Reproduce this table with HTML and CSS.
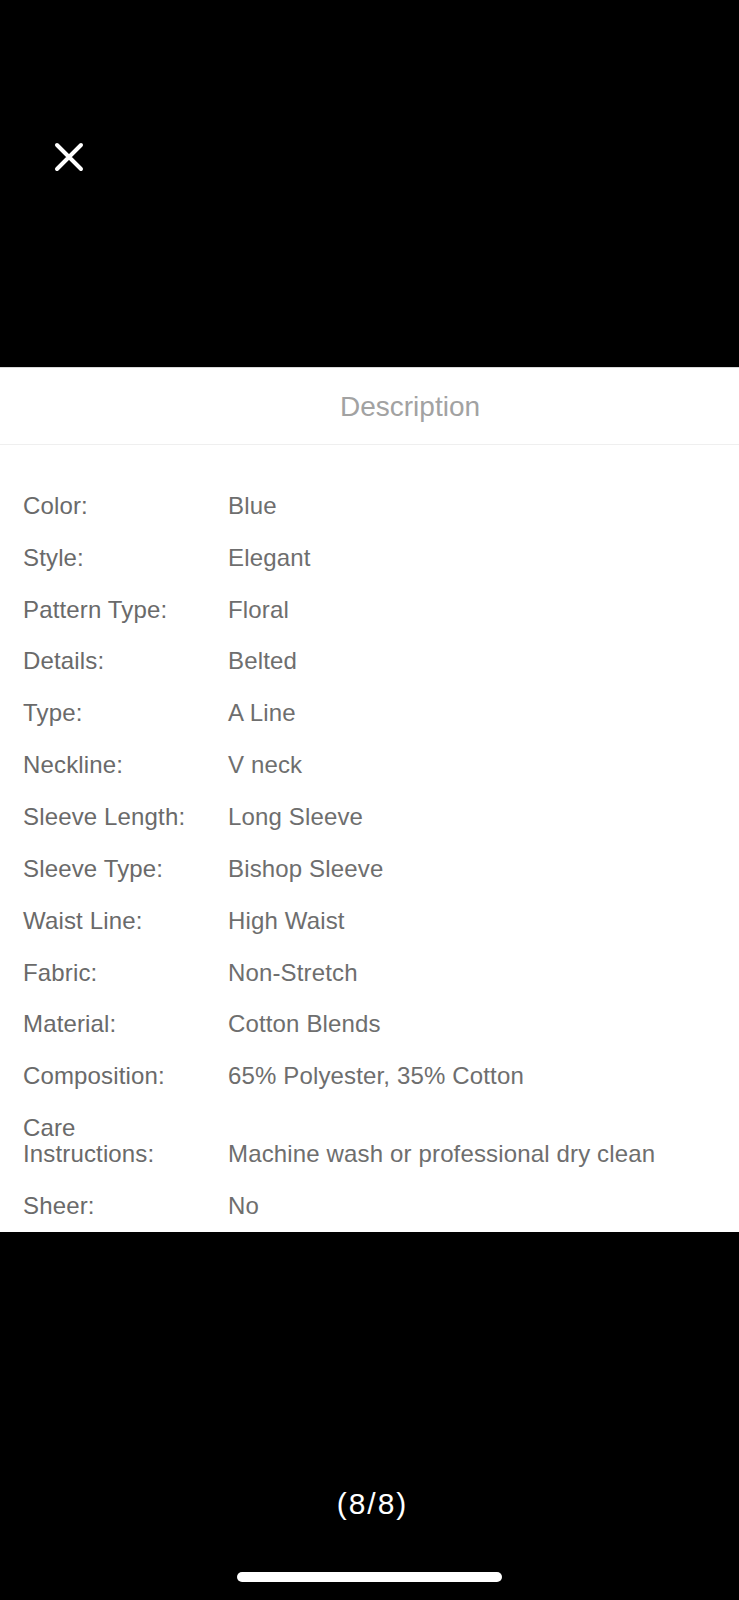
FILE: index.html
```html
<!DOCTYPE html>
<html lang="en">
<head>
<meta charset="utf-8">
<title>Description</title>
<link rel="stylesheet" href="styles.css">
</head>
<body>
<div class="screen">
  <div class="top">
    <button class="close" aria-label="Close">
      <svg width="32" height="32" viewBox="0 0 32 32"><path d="M4 4 L28 28 M28 4 L4 28" stroke="#fff" stroke-width="4" stroke-linecap="round" fill="none"/></svg>
    </button>
  </div>
  <div class="panel">
    <div class="panel-head">Description</div>
    <div class="specs">
      <div class="row"><div class="label">Color:</div><div class="value">Blue</div></div>
      <div class="row"><div class="label">Style:</div><div class="value">Elegant</div></div>
      <div class="row"><div class="label">Pattern Type:</div><div class="value">Floral</div></div>
      <div class="row"><div class="label">Details:</div><div class="value">Belted</div></div>
      <div class="row"><div class="label">Type:</div><div class="value">A Line</div></div>
      <div class="row"><div class="label">Neckline:</div><div class="value">V neck</div></div>
      <div class="row"><div class="label">Sleeve Length:</div><div class="value">Long Sleeve</div></div>
      <div class="row"><div class="label">Sleeve Type:</div><div class="value">Bishop Sleeve</div></div>
      <div class="row"><div class="label">Waist Line:</div><div class="value">High Waist</div></div>
      <div class="row"><div class="label">Fabric:</div><div class="value">Non-Stretch</div></div>
      <div class="row"><div class="label">Material:</div><div class="value">Cotton Blends</div></div>
      <div class="row"><div class="label">Composition:</div><div class="value">65% Polyester, 35% Cotton</div></div>
      <div class="row"><div class="label">Care Instructions:</div><div class="value">Machine wash or professional dry clean</div></div>
      <div class="row"><div class="label">Sheer:</div><div class="value">No</div></div>
    </div>
  </div>
  <div class="bottom">
    <div class="counter">(8/8)</div>
    <div class="home-bar"></div>
  </div>
</div>
</body>
</html>
```

FILE: styles.css
```css
html, body {
  margin: 0;
  padding: 0;
  background: #000;
}

body {
  font-family: "Liberation Sans", Arial, sans-serif;
}

.screen {
  width: 739px;
  height: 1600px;
  display: flex;
  flex-direction: column;
  background: #000;
}

.top {
  height: 367px;
  box-sizing: border-box;
  padding: 141px 0 0 53px;
}

.close {
  display: block;
  width: 32px;
  height: 32px;
  padding: 0;
  margin: 0;
  border: 0;
  background: transparent;
}

.close svg {
  display: block;
}

.panel {
  background: #fff;
  border-top: 1px solid #d8d8d8;
}

.panel-head {
  height: 77px;
  box-sizing: border-box;
  border-bottom: 1px solid #efefef;
  display: flex;
  align-items: center;
  justify-content: center;
  padding-left: 81px;
  padding-top: 1px;
  font-size: 28px;
  color: #a2a2a2;
}

.specs {
  padding: 35px 0 0 23px;
}

.row {
  display: grid;
  grid-template-columns: 170px 1fr;
  column-gap: 35px;
  align-items: end;
  padding: 12.93px 0;
  font-size: 24px;
  line-height: 26px;
  letter-spacing: 0.15px;
}

.label {
  color: #6a6a6a;
}

.value {
  color: #6e6e6e;
}

.bottom {
  flex: 1;
  display: flex;
  flex-direction: column;
  align-items: center;
}

.counter {
  margin-top: 254px;
  padding-left: 6px;
  font-size: 30px;
  line-height: 36px;
  letter-spacing: 2px;
  color: #fff;
}

.home-bar {
  margin-top: 50px;
  width: 265px;
  height: 10px;
  border-radius: 5px;
  background: #fff;
}
```
